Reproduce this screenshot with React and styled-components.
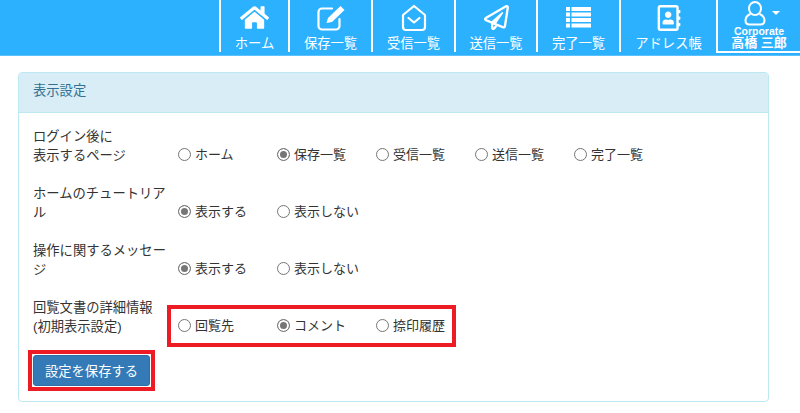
import React from 'react';
import styled, { createGlobalStyle } from 'styled-components';
import { FaHome, FaRegPaperPlane, FaRegAddressBook } from 'react-icons/fa';

const GlobalStyle = createGlobalStyle`
  html, body {
    margin: 0;
    padding: 0;
    background: #fff;
    overflow: hidden;
  }
  body {
    font-family: "Liberation Sans", "Noto Sans CJK JP", sans-serif;
    font-size: 13.3px;
    line-height: 20px;
    color: #333;
  }
`;

const EditIcon = () => (
  <svg width="30" height="28" viewBox="0 0 30 28" fill="none" stroke="#fff" strokeWidth="2.2" strokeLinecap="round" strokeLinejoin="round">
    <path d="M16 4.5 H6 a3.5 3.5 0 0 0 -3.5 3.5 V22 a3.5 3.5 0 0 0 3.5 3.5 H20 a3.5 3.5 0 0 0 3.5 -3.5 V15" />
    <path d="M10.5 19 L12 14 L24.5 2 L28.5 6 L16 18 Z" fill="#fff" stroke="none" />
  </svg>
);

const EnvelopeOpen = () => (
  <svg width="26" height="28" viewBox="0 0 26 28" fill="none" stroke="#fff" strokeWidth="2.2" strokeLinejoin="round" strokeLinecap="round">
    <path d="M2 11 L13 2 L24 11 V23 a3 3 0 0 1 -3 3 H5 A3 3 0 0 1 2 23 Z" />
    <path d="M7.5 14 L13 18.5 L18.5 14" />
  </svg>
);

const ListIcon = () => (
  <svg width="25" height="21" viewBox="0 0 25 21" fill="#fff">
    {[0, 5.5, 11, 16.5].map((y) => (
      <g key={y}>
        <rect x="0" y={y} width="4" height="4" />
        <rect x="5.5" y={y} width="19.5" height="4" />
      </g>
    ))}
  </svg>
);

const UserOutline = () => (
  <svg width="22" height="25" viewBox="0 0 22 25" fill="none" stroke="#fff" strokeWidth="2">
    <ellipse cx="11" cy="7.5" rx="6" ry="6.5" />
    <path d="M6.5 13 C3 14.5 1.5 16.5 1.5 19.5 C1.5 22 3 23.5 5.5 23.5 H16.5 C19 23.5 20.5 22 20.5 19.5 C20.5 16.5 19 14.5 15.5 13" />
  </svg>
);

const navItems = [
  { label: 'ホーム', width: 69, icon: <FaHome size={29} /> },
  { label: '保存一覧', width: 83, icon: <EditIcon /> },
  { label: '受信一覧', width: 83, icon: <EnvelopeOpen /> },
  { label: '送信一覧', width: 82, icon: <FaRegPaperPlane size={25} /> },
  { label: '完了一覧', width: 83, icon: <ListIcon /> },
  { label: 'アドレス帳', width: 97, icon: <FaRegAddressBook size={26} /> },
];

const settings = [
  {
    label: ['ログイン後に', '表示するページ'],
    options: ['ホーム', '保存一覧', '受信一覧', '送信一覧', '完了一覧'],
    checked: 1,
  },
  { label: ['ホームのチュートリア', 'ル'], options: ['表示する', '表示しない'], checked: 0 },
  { label: ['操作に関するメッセー', 'ジ'], options: ['表示する', '表示しない'], checked: 0 },
  {
    label: ['回覧文書の詳細情報', '(初期表示設定)'],
    options: ['回覧先', 'コメント', '捺印履歴'],
    checked: 1,
    marked: true,
  },
];

export default function App() {
  return (
    <>
      <GlobalStyle />
      <Header>
        {navItems.map((item) => (
          <NavItem key={item.label} $width={item.width}>
            <NavIcon>{item.icon}</NavIcon>
            <NavLabel>{item.label}</NavLabel>
          </NavItem>
        ))}
        <UserMenu>
          <UserIconRow>
            <UserOutline />
            <Caret />
          </UserIconRow>
          <UserOrg>Corporate</UserOrg>
          <UserName>高橋 三郎</UserName>
        </UserMenu>
      </Header>
      <Panel>
        <PanelHeading>表示設定</PanelHeading>
        <PanelBody>
          {settings.map((row) => (
            <SettingRow key={row.label[0]}>
              <SettingLabel>
                {row.label.map((line) => (
                  <div key={line}>{line}</div>
                ))}
              </SettingLabel>
              <RadioGroup $marked={row.marked}>
                {row.options.map((option, i) => (
                  <RadioLabel key={option}>
                    <RadioDot $checked={i === row.checked} />
                    {option}
                  </RadioLabel>
                ))}
              </RadioGroup>
            </SettingRow>
          ))}
          <SaveFrame>
            <SaveButton type="button">設定を保存する</SaveButton>
          </SaveFrame>
        </PanelBody>
      </Panel>
    </>
  );
}

const Header = styled.header`
  display: flex;
  justify-content: flex-end;
  align-items: flex-start;
  height: 55px;
  background: #2cb1ff;
  border-bottom: 1px solid #5bc2ff;
  color: #fff;
`;

const NavItem = styled.div`
  width: ${(p) => p.$width}px;
  height: 52px;
  box-sizing: border-box;
  border-left: 2px solid #fff;
  display: flex;
  flex-direction: column;
  align-items: center;
`;

const NavIcon = styled.div`
  height: 31px;
  margin-top: 2px;
  display: flex;
  align-items: center;
  justify-content: center;
`;

const NavLabel = styled.div`
  font-size: 13.3px;
  line-height: 16px;
  margin-top: 3px;
  white-space: nowrap;
`;

const UserMenu = styled.div`
  width: 84px;
  height: 53px;
  box-sizing: border-box;
  border-left: 2px solid #fff;
  border-bottom: 2px solid #fff;
  display: flex;
  flex-direction: column;
  align-items: center;
`;

const UserIconRow = styled.div`
  display: flex;
  align-items: center;
  height: 24px;
  margin-top: 1px;
  margin-left: 5px;
  gap: 6px;
`;

const Caret = styled.span`
  width: 0;
  height: 0;
  border-left: 4px solid transparent;
  border-right: 4px solid transparent;
  border-top: 4px solid #fff;
`;

const UserOrg = styled.div`
  font-size: 10.5px;
  font-weight: bold;
  line-height: 10px;
  margin-top: 1px;
`;

const UserName = styled.div`
  font-size: 13px;
  font-weight: bold;
  line-height: 14px;
  white-space: nowrap;
`;

const Panel = styled.section`
  box-sizing: border-box;
  width: 751px;
  height: 330px;
  margin: 16px 0 0 18px;
  background: #fff;
  border: 1px solid #bce8f1;
  border-radius: 4px;
`;

const PanelHeading = styled.div`
  height: 40px;
  box-sizing: border-box;
  padding: 8px 14px;
  line-height: 20px;
  color: #31708f;
  background: #d9edf7;
  border-bottom: 1px solid #bce8f1;
  border-radius: 3px 3px 0 0;
`;

const PanelBody = styled.div`
  padding: 12px 14px 0;
`;

const SettingRow = styled.div`
  display: flex;
  align-items: flex-end;
  height: 40px;
  margin-bottom: 17px;
`;

const SettingLabel = styled.div`
  width: 145px;
  flex: none;
  line-height: 19px;
  white-space: nowrap;
`;

const RadioGroup = styled.div`
  display: flex;
  height: 20px;
  ${(p) => p.$marked && 'outline: 4px solid #ed1c24; outline-offset: 7px;'}
`;

const RadioLabel = styled.label`
  width: 99px;
  display: flex;
  align-items: center;
  gap: 4px;
  font-size: 13px;
  white-space: nowrap;
  &:last-child {
    width: auto;
  }
`;

const RadioDot = styled.span`
  width: 13px;
  height: 13px;
  flex: none;
  box-sizing: border-box;
  border: 1px solid #767676;
  border-radius: 50%;
  background: ${(p) => (p.$checked ? '#767676' : '#fff')};
  box-shadow: ${(p) => (p.$checked ? 'inset 0 0 0 2px #fff' : 'none')};
  margin-top: -2px;
`;

const SaveFrame = styled.div`
  width: fit-content;
  margin: -3px 0 0 -5px;
  padding: 1px;
  border: 4px solid #ed1c24;
  background: #fff;
`;

const SaveButton = styled.button`
  display: block;
  box-sizing: border-box;
  width: 117px;
  height: 31px;
  padding: 0;
  font-family: inherit;
  font-size: 13.3px;
  color: #fff;
  background: #337ab7;
  border: 1px solid #2e6da4;
  border-radius: 3px;
`;
